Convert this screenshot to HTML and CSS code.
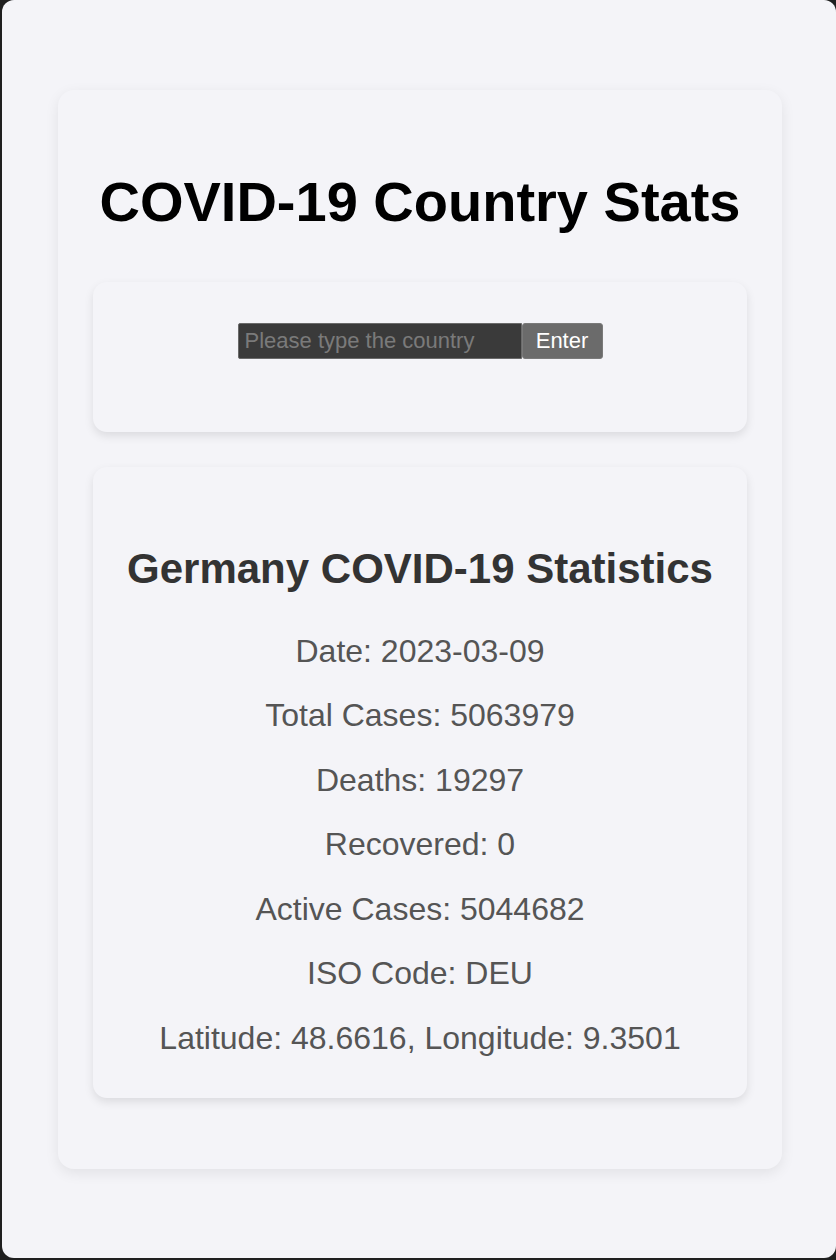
FILE: index.html
```html
<!DOCTYPE html>
<html lang="en">
<head>
<meta charset="utf-8">
<title>COVID-19 Country Stats</title>
<link rel="stylesheet" href="styles.css">
</head>
<body>
<div class="screen">
  <main class="app">
    <h1 class="title">COVID-19 Country Stats</h1>
    <section class="card search-card">
      <form class="search">
        <input class="search-input" type="text" placeholder="Please type the country">
        <button class="search-btn" type="button">Enter</button>
      </form>
    </section>
    <section class="card results">
      <h2 class="results-title">Germany COVID-19 Statistics</h2>
      <p class="stat">Date: 2023-03-09</p>
      <p class="stat">Total Cases: 5063979</p>
      <p class="stat">Deaths: 19297</p>
      <p class="stat">Recovered: 0</p>
      <p class="stat">Active Cases: 5044682</p>
      <p class="stat">ISO Code: DEU</p>
      <p class="stat">Latitude: 48.6616, Longitude: 9.3501</p>
    </section>
  </main>
</div>
</body>
</html>
```
FILE: styles.css
```css
html, body {
  margin: 0;
  padding: 0;
  background: #1f1f1f;
}
body {
  font-family: "Liberation Sans", Arial, sans-serif;
}
.screen {
  margin: 0 0 2px 2px;
  height: 1258px;
  border-radius: 12px;
  background: #f4f4f8;
  display: flex;
  justify-content: center;
  align-items: flex-start;
  padding: 90px 0 0 2px;
  box-sizing: border-box;
}
.app {
  width: 724px;
  box-sizing: border-box;
  padding: 80px 35px 71px;
  background: #f4f4f8;
  border-radius: 16px;
  box-shadow: 0 4px 14px rgba(0, 0, 0, 0.08);
  display: flex;
  flex-direction: column;
}
.title {
  margin: 0 0 48px;
  font-size: 56px;
  line-height: 64px;
  font-weight: bold;
  color: #000;
  text-align: center;
}
.card {
  background: #f4f4f8;
  border-radius: 14px;
  box-shadow: 0 4px 10px rgba(0, 0, 0, 0.1);
}
.search-card {
  padding: 41px 0 73px;
  margin-bottom: 35px;
}
.search {
  display: flex;
  justify-content: center;
  margin: 0;
}
.search-input {
  width: 284px;
  height: 36px;
  box-sizing: border-box;
  margin: 0;
  padding: 0 6px;
  background: #3a3a3a;
  border: 1px solid #6a6a6a;
  border-radius: 2px 0 0 2px;
  color: #ddd;
  font-family: "Liberation Sans", Arial, sans-serif;
  font-size: 22px;
  outline: none;
}
.search-input::placeholder {
  color: #7a7a7a;
}
.search-btn {
  width: 81px;
  height: 36px;
  box-sizing: border-box;
  margin: 0;
  padding: 0;
  background: #6b6b6b;
  border: 1px solid #7a7a7a;
  border-radius: 3px;
  color: #fff;
  font-family: "Liberation Sans", Arial, sans-serif;
  font-size: 22px;
}
.results {
  padding: 78px 20px 42px;
  display: flex;
  flex-direction: column;
  align-items: center;
  gap: 28.5px;
}
.results-title {
  margin: 0 0 11px;
  font-size: 42px;
  line-height: 48px;
  font-weight: bold;
  color: #333;
  text-align: center;
}
.stat {
  margin: 0;
  font-size: 32px;
  line-height: 36px;
  color: #555;
  text-align: center;
}
```
